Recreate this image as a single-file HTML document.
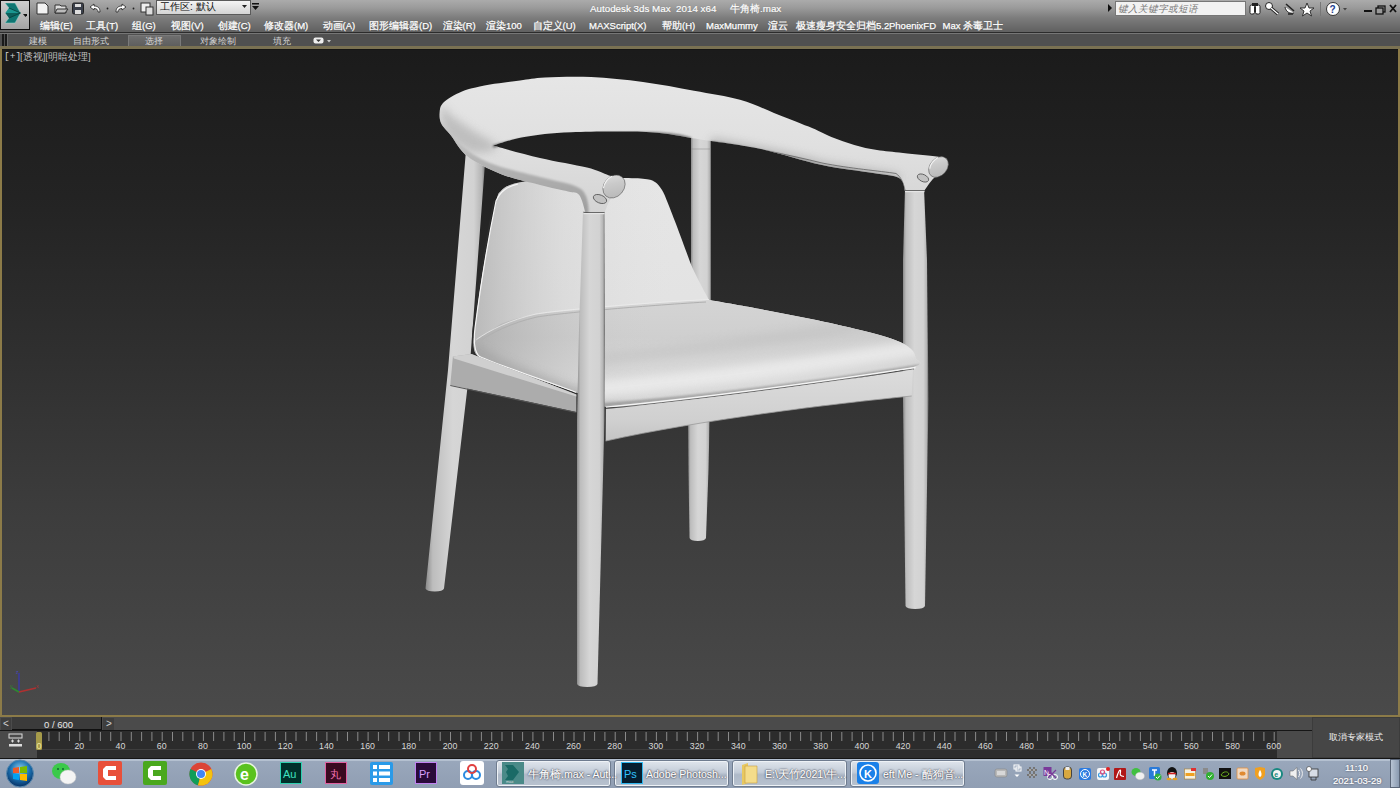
<!DOCTYPE html>
<html><head><meta charset="utf-8"><style>
*{margin:0;padding:0;box-sizing:border-box}
html,body{width:1400px;height:788px;overflow:hidden;background:#2a2a2a;font-family:"Liberation Sans",sans-serif}
.a{position:absolute}
.t{position:absolute;white-space:nowrap;line-height:1}
#top{left:0;top:0;width:1400px;height:32px;background:linear-gradient(#ababab 0px,#9a9a9a 8px,#7c7c7c 18px,#626262 31px)}
.mn{top:20.5px;font-size:9.5px;color:#fff;-webkit-text-stroke:.25px #fff;text-shadow:0 0 1px #555}
.rb{top:36.5px;font-size:9px;color:#d4d4d4}
#sep1{left:0;top:32px;width:1400px;height:1px;background:#2c2c2c}
#sep2{left:0;top:33px;width:1400px;height:1px;background:#767676}
#rib{left:0;top:34px;width:1400px;height:12px;background:#505050}
#gold{left:0;top:46px;width:1400px;height:3px;background:#7a7152}
#gold2{left:0;top:49px;width:1400px;height:1px;background:#141414}
#vp{left:0;top:50px;width:1400px;height:667px;background:linear-gradient(#1b1b1b 0%,#232323 22%,#2f2f2f 45%,#3d3d3d 70%,#4a4a4a 100%)}
#vpl{left:0;top:49px;width:2px;height:668px;background:#8c7b48}
#vpr{left:1398px;top:49px;width:2px;height:668px;background:#8c7b48}
#vpb{left:0;top:715px;width:1400px;height:2px;background:#8c7b48}
#slider{left:0;top:717px;width:1312px;height:14px;background:#4b4b4b}
#track{left:37px;top:731px;width:1240px;height:27px;background:#2c2c2c}
#trackl{left:0;top:731px;width:37px;height:27px;background:#4a4a4a}
#trackr{left:1277px;top:731px;width:35px;height:27px;background:#4a4a4a}
#xp{left:1312px;top:717px;width:88px;height:41px;background:#464646;border:1px solid #3c3c3c}
#task{left:0;top:758px;width:1400px;height:30px;background:linear-gradient(#9aa8bc 0px,#909eb3 100%)}
.tb{position:absolute;top:760px;height:27px;border:1px solid #6f7c8f;border-radius:3px;background:linear-gradient(#dfe5ec,#c3ccd8 45%,#aeb9c8 55%,#b8c2cf);box-shadow:inset 0 0 0 1px #eef2f6}
.tbt{position:absolute;top:768px;font-size:10.5px;color:#fff;-webkit-text-stroke:.2px #fff;text-shadow:0 0 2px #223,0 0 1px #223;white-space:nowrap}
.ic{position:absolute;top:761px;width:22px;height:24px}
.tr{position:absolute;top:766px;width:13px;height:13px}
</style></head><body>
<div id="top" class="a"></div>
<div class="a" style="left:0;top:0;width:30px;height:30px;background:#101010"></div>
<div class="a" style="left:1px;top:1px;width:28px;height:28px;background:linear-gradient(#cfcfcf,#a4a4a4)"></div>
<svg class="a" style="left:3px;top:3px" width="24" height="22"><path d="M2,0 L12,0 L17.5,10 L12,20 L2,20 L6,15 L2.5,10 L6,5Z" fill="#0f7672" stroke="#9ad8d0" stroke-width=".5"/><path d="M6,5 L17.5,10 L2.5,10Z" fill="#1a9690"/><path d="M2.5,10 L17.5,10 L6,15Z" fill="#0c5e5a"/><path d="M6,5 L17.5,10 M6,15 L17.5,10" stroke="#083c3a" stroke-width=".8"/><path d="M20,11 L25,11 L22.5,14Z" fill="#111"/></svg>
<svg class="a" style="left:34px;top:1px" width="122" height="15"><path d="M3,2 L11,2 L14,5 L14,13 L3,13Z" fill="#f2f2f2" stroke="#333" stroke-width="1"/><path d="M21,4 L26,4 L27,5 L32,5 L32,12 L21,12Z" fill="#ddd" stroke="#333"/><path d="M23,8 L34,8 L31,12 L21,12Z" fill="#bbb" stroke="#333"/><rect x="38.5" y="2" width="11" height="11" rx="1.5" fill="#3a3f4a" stroke="#222"/><rect x="41" y="3" width="6" height="3" fill="#ddd"/><rect x="41" y="9" width="6" height="4" fill="#ddd"/><path d="M56,6 L60,3 L60,5 C64,5 66,7 66,11 L64,11 C64,8.5 62.5,7.5 60,7.5 L60,9Z" fill="#fff" stroke="#222" stroke-width=".8"/><circle cx="73.5" cy="7.5" r=".9" fill="#222"/><path d="M92,6 L88,3 L88,5 C84,5 82,7 82,11 L84,11 C84,8.5 85.5,7.5 88,7.5 L88,9Z" fill="#fff" stroke="#222" stroke-width=".8"/><circle cx="99.5" cy="7.5" r=".9" fill="#222"/><rect x="107" y="2" width="9" height="9" fill="#eee" stroke="#333"/><rect x="112" y="6" width="7" height="8" fill="#ddd" stroke="#333"/></svg>
<div class="a" style="left:156px;top:0;width:95px;height:15px;border:1px solid #5a5a5a;background:linear-gradient(#f4f4f4,#d4d4d4)"></div>
<div class="t" style="left:160px;top:2px;font-size:10px;color:#111">工作区: 默认</div>
<svg class="a" style="left:242px;top:5px" width="6" height="4"><path d="M0,0 L5,0 L2.5,3Z" fill="#222"/></svg>
<svg class="a" style="left:252px;top:3px" width="8" height="8"><rect x="0" y="0" width="7" height="1.5" fill="#111"/><path d="M0,3 L7,3 L3.5,7Z" fill="#111"/></svg>
<div class="t" style="left:590px;top:3.5px;font-size:9.8px;color:#fff;-webkit-text-stroke:.2px #fff;text-shadow:0 0 1px #666">Autodesk 3ds Max&nbsp; 2014 x64</div>
<div class="t" style="left:730px;top:3.5px;font-size:9.8px;color:#fff;-webkit-text-stroke:.2px #fff;text-shadow:0 0 1px #666">牛角椅.max</div>
<svg class="a" style="left:1107px;top:4px" width="6" height="8"><path d="M1,0 L5,4 L1,8Z" fill="#111"/></svg>
<div class="a" style="left:1115px;top:1px;width:131px;height:15px;background:#f2f2f2;border:1px solid #777"></div>
<div class="t" style="left:1118px;top:3.5px;font-size:9.5px;color:#777;font-style:italic">键入关键字或短语</div>
<svg class="a" style="left:1248px;top:1px" width="152" height="16"><rect x="2" y="4" width="4.5" height="9" rx="1.5" fill="#fff" stroke="#222"/><rect x="7.5" y="4" width="4.5" height="9" rx="1.5" fill="#fff" stroke="#222"/><rect x="4" y="2" width="6" height="3" fill="#222"/><circle cx="21" cy="5" r="3.5" fill="#fff" stroke="#222"/><path d="M23,7 L30,13" stroke="#222" stroke-width="3"/><path d="M23,7 L30,13" stroke="#fff" stroke-width="1.2"/><path d="M38,3 L46,10" stroke="#222" stroke-width="1.5"/><path d="M37,6 C38,11 42,13 46,12" fill="#fff" stroke="#222"/><path d="M40,13 L45,13" stroke="#222" stroke-width="1.5"/><path d="M59,2 L61,7 L66,7 L62,10 L63.5,15 L59,12 L54.5,15 L56,10 L52,7 L57,7Z" fill="#fff" stroke="#222" stroke-width=".9"/><rect x="72" y="1" width="1" height="14" fill="#777"/><circle cx="85" cy="8" r="6.5" fill="#fff" stroke="#333"/><text x="81.5" y="12" font-size="10" font-weight="bold" fill="#1b3d8f" font-family="Liberation Sans">?</text><path d="M95,7 L99,7 L97,9.5Z" fill="#444"/><rect x="116" y="9" width="8" height="2" fill="#111"/><rect x="130" y="5" width="7" height="6" fill="none" stroke="#111" stroke-width="1.3"/><rect x="128" y="7" width="7" height="6" fill="#999" stroke="#111" stroke-width="1.3"/><path d="M142,4 L148,11 M148,4 L142,11" stroke="#111" stroke-width="1.8"/></svg>
<div class="t mn" style="left:40.0px">编辑(E)</div>
<div class="t mn" style="left:86.0px">工具(T)</div>
<div class="t mn" style="left:132.0px">组(G)</div>
<div class="t mn" style="left:171.0px">视图(V)</div>
<div class="t mn" style="left:217.5px">创建(C)</div>
<div class="t mn" style="left:264.0px">修改器(M)</div>
<div class="t mn" style="left:322.5px">动画(A)</div>
<div class="t mn" style="left:369.0px">图形编辑器(D)</div>
<div class="t mn" style="left:442.5px">渲染(R)</div>
<div class="t mn" style="left:486.0px">渲染100</div>
<div class="t mn" style="left:532.5px">自定义(U)</div>
<div class="t mn" style="left:589.0px">MAXScript(X)</div>
<div class="t mn" style="left:662.0px">帮助(H)</div>
<div class="t mn" style="left:706.0px">MaxMummy</div>
<div class="t mn" style="left:768.0px">渲云</div>
<div class="t mn" style="left:796.0px">极速瘦身安全归档5.2</div>
<div class="t mn" style="left:889.0px">PhoenixFD</div>
<div class="t mn" style="left:942.5px">Max 杀毒卫士</div>
<div id="sep1" class="a"></div><div id="sep2" class="a"></div><div id="rib" class="a"></div>
<div class="a" style="left:2px;top:34px;width:1.5px;height:12px;background:#1a1a1a"></div><div class="a" style="left:5px;top:34px;width:1.5px;height:12px;background:#1a1a1a"></div>
<div class="a" style="left:7px;top:34px;width:1px;height:12px;background:#6a6a6a"></div>
<div class="a" style="left:127.5px;top:35px;width:53px;height:12px;background:linear-gradient(#6e6e6e,#5c5c5c);border:1px solid #7a7a7a;border-bottom:none"></div>
<div class="t rb" style="left:28.5px">建模</div>
<div class="t rb" style="left:72.5px">自由形式</div>
<div class="t rb" style="left:145.0px">选择</div>
<div class="t rb" style="left:200.0px">对象绘制</div>
<div class="t rb" style="left:272.5px">填充</div>
<svg class="a" style="left:313px;top:37px" width="20" height="8"><rect x="0.5" y="0.5" width="10" height="6" rx="2" fill="#eee"/><path d="M3,2.5 L8,2.5 L5.5,5Z" fill="#333"/><path d="M14,3 L18,3 L16,5.5Z" fill="#ccc"/></svg>
<div id="gold" class="a"></div><div id="gold2" class="a"></div>
<div id="vp" class="a"></div>
<div class="t" style="left:4px;top:52px;font-size:9.5px;color:#d0d0d0;font-family:'Liberation Mono',monospace">[+]</div>
<div class="t" style="left:20px;top:52px;font-size:9.5px;color:#bdbdbd">[透视][明暗处理]</div>
<div id="vpl" class="a"></div><div id="vpr" class="a"></div><div id="vpb" class="a"></div>
<svg class="a" style="left:6px;top:668px" width="36" height="32"><path d="M13,5 L13,24" stroke="#3a3aa0" stroke-width="1.5"/><path d="M13,24 L30,20" stroke="#b03030" stroke-width="1.5"/><path d="M13,24 L6,20" stroke="#2e8a2e" stroke-width="1.5"/><text x="10" y="6" font-size="5" fill="#4848c0">z</text><text x="30" y="20" font-size="5" fill="#b03030">x</text><text x="4" y="20" font-size="5" fill="#2e8a2e">y</text></svg>
<svg class="a" style="left:0;top:0" width="1400" height="788"><defs>
<linearGradient id="lg" x1="0" x2="1" y1="0" y2="0"><stop offset="0" stop-color="#8a8a8a"/><stop offset=".12" stop-color="#bdbdbd"/><stop offset=".45" stop-color="#d6d6d6"/><stop offset=".8" stop-color="#d2d2d2"/><stop offset=".93" stop-color="#b4b4b4"/><stop offset="1" stop-color="#6a6a6a"/></linearGradient>
<linearGradient id="rail" x1="0" x2="0" y1="0" y2="1"><stop offset="0" stop-color="#e6e6e6"/><stop offset=".5" stop-color="#e0e0e0"/><stop offset="1" stop-color="#d4d4d4"/></linearGradient>
<linearGradient id="armband" x1="0" x2="0" y1="0" y2="1"><stop offset="0" stop-color="#c8c8c8" stop-opacity=".2"/><stop offset=".45" stop-color="#b4b4b4" stop-opacity=".95"/><stop offset="1" stop-color="#9c9c9c"/></linearGradient>
<linearGradient id="back" x1="0" x2="0" y1="0" y2="1"><stop offset="0" stop-color="#e6e6e6"/><stop offset=".7" stop-color="#e2e2e2"/><stop offset="1" stop-color="#d8d8d8"/></linearGradient>
<linearGradient id="backl" x1="0" x2="1" y1="0" y2="0"><stop offset="0" stop-color="#a8a8a8" stop-opacity=".7"/><stop offset=".2" stop-color="#c8c8c8" stop-opacity=".3"/><stop offset=".45" stop-color="#e0e0e0" stop-opacity="0"/></linearGradient>
<linearGradient id="seat" x1="0" x2="0" y1="0" y2="1"><stop offset="0" stop-color="#d4d4d4"/><stop offset=".35" stop-color="#cfcfcf"/><stop offset=".75" stop-color="#dadada"/><stop offset=".92" stop-color="#d6d6d6"/><stop offset="1" stop-color="#bcbcbc"/></linearGradient>
<linearGradient id="seatl" x1="0" x2="1" y1="0" y2="0"><stop offset="0" stop-color="#9a9a9a" stop-opacity=".6"/><stop offset=".25" stop-color="#bbbbbb" stop-opacity=".2"/><stop offset=".4" stop-color="#cccccc" stop-opacity="0"/></linearGradient>
<linearGradient id="frame" x1="0" x2="0" y1="0" y2="1"><stop offset="0" stop-color="#dcdcdc"/><stop offset=".7" stop-color="#d0d0d0"/><stop offset="1" stop-color="#c4c4c4"/></linearGradient>
<filter id="bl2" x="-20%" y="-20%" width="140%" height="140%"><feGaussianBlur stdDeviation="2"/></filter>
<filter id="bl1" x="-20%" y="-20%" width="140%" height="140%"><feGaussianBlur stdDeviation="1"/></filter>
<filter id="bl4" x="-20%" y="-50%" width="140%" height="200%"><feGaussianBlur stdDeviation="4"/></filter>
<clipPath id="seatclip"><path d="M476.7,340.0 C478.9,338.5 485.2,334.0 490.0,331.0 C494.8,328.0 497.9,324.7 505.6,322.0 C513.3,319.3 523.8,316.6 536.0,314.6 C548.2,312.6 559.7,311.9 578.7,310.0 C597.7,308.1 628.3,305.2 650.0,303.5 C671.7,301.8 699.2,300.6 709.0,300.0 C717.5,301.5 743.0,305.8 760.0,309.0 C777.0,312.2 794.3,315.5 811.0,319.0 C827.7,322.5 846.0,326.5 860.0,330.0 C874.0,333.5 886.5,336.8 895.0,340.0 C903.5,343.2 907.6,346.0 911.0,349.0 C914.4,352.0 915.1,355.1 915.6,358.0 C916.1,360.9 927.1,362.9 914.0,366.7 C900.9,370.5 867.0,376.1 837.0,381.0 C807.0,385.9 764.0,392.0 734.0,396.0 C704.0,400.0 678.5,403.2 657.0,405.0 C635.5,406.8 613.7,406.3 605.0,406.6 C600.2,404.2 580.8,394.4 576.0,392.0 C562.8,387.5 512.8,370.9 496.5,364.8 C480.2,358.7 481.8,358.7 478.0,355.6 C474.2,352.6 473.9,349.1 473.7,346.5 C473.5,343.9 476.2,341.1 476.7,340.0Z"/></clipPath>
<clipPath id="railclip"><path d="M439.8,110.5 C440.1,107.2 441.1,105.2 443.0,103.0 C444.9,100.8 447.8,98.9 451.0,97.0 C454.2,95.1 458.5,93.0 462.0,91.5 C465.5,90.0 467.3,89.5 472.0,88.3 C476.7,87.1 482.0,85.8 490.0,84.5 C498.0,83.2 510.8,81.7 520.0,80.5 C529.2,79.3 533.2,78.1 545.0,77.5 C556.8,76.9 574.7,76.2 591.0,77.0 C607.3,77.8 625.8,79.7 643.0,82.0 C660.2,84.3 677.8,87.8 694.0,90.7 C710.2,93.7 726.7,96.0 740.0,99.7 C753.3,103.4 762.6,108.4 774.0,112.9 C785.4,117.4 799.0,122.6 808.6,126.6 C818.2,130.6 823.8,133.8 831.4,136.9 C839.0,140.0 846.7,142.7 854.3,144.9 C861.9,147.1 868.9,148.7 877.0,150.0 C885.1,151.3 892.5,151.8 903.0,153.0 C913.5,154.2 932.7,155.5 940.0,157.0 C947.3,158.5 945.7,160.5 947.0,162.0 C948.3,163.5 948.5,164.2 948.0,166.0 C947.5,167.8 946.3,171.0 944.0,173.0 C941.7,175.0 937.3,175.0 934.0,178.0 C930.7,181.0 925.7,188.8 924.0,191.0 C920.8,191.0 908.2,191.0 905.0,191.0 C904.0,188.8 904.3,181.0 899.0,178.0 C893.7,175.0 885.8,175.2 873.0,173.0 C860.2,170.8 840.7,169.0 822.0,165.0 C803.3,161.0 779.5,153.0 761.0,149.0 C742.5,145.0 719.3,142.3 711.0,141.0 C707.7,140.5 694.3,138.5 691.0,138.0 C684.2,137.0 669.9,133.2 650.0,132.2 C630.1,131.2 592.4,131.4 571.4,132.2 C550.4,133.0 537.4,134.8 524.3,137.0 C511.2,139.2 498.1,144.2 492.9,145.6 C500.8,147.7 524.3,154.3 540.0,158.0 C555.7,161.7 575.5,164.7 587.0,167.6 C598.5,170.5 603.0,173.6 609.0,175.4 C615.0,177.2 620.5,177.0 623.3,178.6 C626.1,180.2 626.1,182.3 625.6,184.9 C625.1,187.5 622.5,191.7 620.0,194.0 C617.5,196.3 613.3,195.8 610.7,199.0 C608.1,202.2 605.5,210.7 604.4,213.0 C601.3,213.0 588.7,213.0 585.6,213.0 C584.5,210.0 582.2,198.6 579.3,195.0 C576.4,191.4 574.5,193.2 568.0,191.5 C561.5,189.8 551.2,187.9 540.0,185.0 C528.8,182.1 512.8,178.7 500.7,174.0 C488.6,169.3 476.0,163.0 467.7,156.6 C459.4,150.2 455.4,141.2 451.0,135.6 C446.6,130.0 442.9,127.2 441.0,123.0 C439.1,118.8 439.5,113.8 439.8,110.5Z"/></clipPath>
<linearGradient id="knob" x1="0" x2="1" y1="0" y2="1"><stop offset="0" stop-color="#e0e0e0"/><stop offset=".4" stop-color="#cacaca"/><stop offset="1" stop-color="#b4b4b4"/></linearGradient>
</defs>
<path fill="url(#lg)" d="M688.0,400.0 L710.0,400.0 L708.5,470.0 L706.0,538.0 Q705.0,541.0 697.8,541.0 Q690.5,541.0 689.5,538.0 L688.5,470.0 L688.0,400.0Z"/>
<path fill="url(#lg)" d="M691.0,136.0 L711.0,136.0 L711.0,310.0 L691.0,310.0Z"/>
<path fill="url(#lg)" d="M905.0,188.0 L924.0,188.0 L927.0,260.0 L928.5,400.0 L925.0,606.0 Q924.0,609.0 915.2,609.0 Q906.5,609.0 905.5,606.0 L903.0,400.0 L903.0,260.0 L905.0,188.0Z"/>
<path fill="url(#lg)" d="M466.0,150.0 L486.0,150.0 L469.5,370.0 L444.0,588.5 Q443.0,591.5 434.8,591.5 Q426.5,591.5 425.5,588.5 L448.0,370.0 L466.0,150.0Z"/>
<path fill="url(#back)" d="M501.0,191.0 C503.2,188.4 505.2,186.7 510.0,185.0 C514.8,183.3 520.0,182.0 530.0,181.0 C540.0,180.0 555.0,179.5 570.0,179.0 C585.0,178.5 607.5,178.0 620.0,178.0 C632.5,178.0 639.2,178.3 645.0,179.0 C650.8,179.7 652.2,180.2 655.0,182.0 C657.8,183.8 660.0,186.8 662.0,190.0 C664.0,193.2 664.7,195.3 667.0,201.0 C669.3,206.7 672.8,215.7 676.0,224.0 C679.2,232.3 683.2,243.5 686.0,251.0 C688.8,258.5 690.3,263.0 693.0,269.0 C695.7,275.0 699.3,281.8 702.0,287.0 C704.7,292.2 707.8,297.8 709.0,300.0 C717.5,301.5 743.0,305.8 760.0,309.0 C777.0,312.2 794.3,315.5 811.0,319.0 C827.7,322.5 846.0,326.5 860.0,330.0 C874.0,333.5 886.5,336.8 895.0,340.0 C903.5,343.2 907.6,346.0 911.0,349.0 C914.4,352.0 915.1,355.1 915.6,358.0 C916.1,360.9 927.1,362.9 914.0,366.7 C900.9,370.5 867.0,376.1 837.0,381.0 C807.0,385.9 764.0,392.0 734.0,396.0 C704.0,400.0 678.5,403.2 657.0,405.0 C635.5,406.8 613.7,406.3 605.0,406.6 C600.2,404.2 580.8,394.4 576.0,392.0 C566.2,388.6 530.2,375.9 517.0,371.4 C503.8,366.9 503.0,367.4 496.5,364.8 C490.0,362.2 481.8,358.7 478.0,355.6 C474.2,352.6 474.2,351.1 473.7,346.5 C473.2,341.9 474.2,337.1 475.2,328.0 C476.2,318.9 477.8,305.4 479.8,291.7 C481.8,278.0 484.6,261.2 487.4,246.0 C490.2,230.8 494.2,209.6 496.5,200.4 C498.8,191.2 498.8,193.6 501.0,191.0Z"/>
<path fill="url(#backl)" d="M501.0,191.0 C503.2,188.4 505.2,186.7 510.0,185.0 C514.8,183.3 520.0,182.0 530.0,181.0 C540.0,180.0 555.0,179.5 570.0,179.0 C585.0,178.5 607.5,178.0 620.0,178.0 C632.5,178.0 639.2,178.3 645.0,179.0 C650.8,179.7 652.2,180.2 655.0,182.0 C657.8,183.8 660.0,186.8 662.0,190.0 C664.0,193.2 664.7,195.3 667.0,201.0 C669.3,206.7 672.8,215.7 676.0,224.0 C679.2,232.3 683.2,243.5 686.0,251.0 C688.8,258.5 690.3,263.0 693.0,269.0 C695.7,275.0 699.3,281.8 702.0,287.0 C704.7,292.2 707.8,297.8 709.0,300.0 C717.5,301.5 743.0,305.8 760.0,309.0 C777.0,312.2 794.3,315.5 811.0,319.0 C827.7,322.5 846.0,326.5 860.0,330.0 C874.0,333.5 886.5,336.8 895.0,340.0 C903.5,343.2 907.6,346.0 911.0,349.0 C914.4,352.0 915.1,355.1 915.6,358.0 C916.1,360.9 927.1,362.9 914.0,366.7 C900.9,370.5 867.0,376.1 837.0,381.0 C807.0,385.9 764.0,392.0 734.0,396.0 C704.0,400.0 678.5,403.2 657.0,405.0 C635.5,406.8 613.7,406.3 605.0,406.6 C600.2,404.2 580.8,394.4 576.0,392.0 C566.2,388.6 530.2,375.9 517.0,371.4 C503.8,366.9 503.0,367.4 496.5,364.8 C490.0,362.2 481.8,358.7 478.0,355.6 C474.2,352.6 474.2,351.1 473.7,346.5 C473.2,341.9 474.2,337.1 475.2,328.0 C476.2,318.9 477.8,305.4 479.8,291.7 C481.8,278.0 484.6,261.2 487.4,246.0 C490.2,230.8 494.2,209.6 496.5,200.4 C498.8,191.2 498.8,193.6 501.0,191.0Z"/>
<path fill="url(#seat)" d="M476.7,340.0 C478.9,338.5 485.2,334.0 490.0,331.0 C494.8,328.0 497.9,324.7 505.6,322.0 C513.3,319.3 523.8,316.6 536.0,314.6 C548.2,312.6 559.7,311.9 578.7,310.0 C597.7,308.1 628.3,305.2 650.0,303.5 C671.7,301.8 699.2,300.6 709.0,300.0 C717.5,301.5 743.0,305.8 760.0,309.0 C777.0,312.2 794.3,315.5 811.0,319.0 C827.7,322.5 846.0,326.5 860.0,330.0 C874.0,333.5 886.5,336.8 895.0,340.0 C903.5,343.2 907.6,346.0 911.0,349.0 C914.4,352.0 915.1,355.1 915.6,358.0 C916.1,360.9 927.1,362.9 914.0,366.7 C900.9,370.5 867.0,376.1 837.0,381.0 C807.0,385.9 764.0,392.0 734.0,396.0 C704.0,400.0 678.5,403.2 657.0,405.0 C635.5,406.8 613.7,406.3 605.0,406.6 C600.2,404.2 580.8,394.4 576.0,392.0 C562.8,387.5 512.8,370.9 496.5,364.8 C480.2,358.7 481.8,358.7 478.0,355.6 C474.2,352.6 473.9,349.1 473.7,346.5 C473.5,343.9 476.2,341.1 476.7,340.0Z"/>
<path fill="url(#seatl)" d="M476.7,340.0 C478.9,338.5 485.2,334.0 490.0,331.0 C494.8,328.0 497.9,324.7 505.6,322.0 C513.3,319.3 523.8,316.6 536.0,314.6 C548.2,312.6 559.7,311.9 578.7,310.0 C597.7,308.1 628.3,305.2 650.0,303.5 C671.7,301.8 699.2,300.6 709.0,300.0 C717.5,301.5 743.0,305.8 760.0,309.0 C777.0,312.2 794.3,315.5 811.0,319.0 C827.7,322.5 846.0,326.5 860.0,330.0 C874.0,333.5 886.5,336.8 895.0,340.0 C903.5,343.2 907.6,346.0 911.0,349.0 C914.4,352.0 915.1,355.1 915.6,358.0 C916.1,360.9 927.1,362.9 914.0,366.7 C900.9,370.5 867.0,376.1 837.0,381.0 C807.0,385.9 764.0,392.0 734.0,396.0 C704.0,400.0 678.5,403.2 657.0,405.0 C635.5,406.8 613.7,406.3 605.0,406.6 C600.2,404.2 580.8,394.4 576.0,392.0 C562.8,387.5 512.8,370.9 496.5,364.8 C480.2,358.7 481.8,358.7 478.0,355.6 C474.2,352.6 473.9,349.1 473.7,346.5 C473.5,343.9 476.2,341.1 476.7,340.0Z"/>
<g clip-path="url(#seatclip)">
<path fill="none" stroke="#b8b8b8" stroke-width="12" opacity=".35" filter="url(#bl4)" d="M590,360 C700,350 820,333 930,314"/>
<path fill="none" stroke="#ededed" stroke-width="16" opacity=".8" filter="url(#bl4)" d="M590,390 C700,380 820,364 930,346"/>
<path fill="none" stroke="#8a8a8a" stroke-width="3" opacity=".7" filter="url(#bl1)" d="M590,406 C700,397 820,382 920,366"/>
<path fill="none" stroke="#a0a0a0" stroke-width="16" opacity=".6" filter="url(#bl4)" d="M470,348 C490,366 530,380 590,400"/>
</g>
<path fill="none" stroke="#eeeeee" stroke-width="1" opacity=".7" d="M476.5,339.5 C490,330 510,320 536,314 C560,310 640,303 709,299.5"/>
<path fill="none" stroke="#b0b0b0" stroke-width="1" d="M477.5,342.5 C491,333 511,323 537,317 C561,313 640,306 706,302"/>
<path fill="none" stroke="#f6f6f6" stroke-width="1.2" d="M518,184 C506,187 500,192 496,201 C488,240 480,290 475,328 C473.5,340 474,350 478.5,355.8 C485,361 540,378 576.3,392.5"/>
<path fill="none" stroke="#2e2e2e" stroke-width="1" d="M494,201 C486,240 478,290 473.2,328 C471.7,340 472,352 477,357.5 C484,363 540,380 576.3,394.2"/>
<path fill="none" stroke="#f4f4f4" stroke-width="1.3" d="M605.9,407.2 C700,398 820,382 915.6,367.5"/>
<path fill="none" stroke="#555" stroke-width=".8" d="M605.9,408.6 C700,399.4 820,383.4 914,369"/>
<path fill="#acacac" d="M452.9,356.6 L471.5,354.0 L576.3,394.5 L576.3,412.0 L450.3,385.0Z"/>
<path fill="#cfcfcf" d="M452.9,356.6 L471.5,354.0 L576.3,394.5 L576.3,396.5 L454.0,358.5Z"/>
<path fill="none" stroke="#555" stroke-width="1" d="M450.3,385.5 L576.3,412.5"/>
<path fill="url(#frame)" d="M605.9,409 C700,400 820,384 913,369.5 L911.7,396 C830,404 700,420 605.7,441 Z"/>
<path fill="none" stroke="#9a9a9a" stroke-width=".8" d="M911.7,396 C830,404 700,420 605.7,441"/>
<path fill="url(#lg)" d="M583.0,211.0 L604.5,211.0 L605.0,330.0 L604.5,420.0 L597.5,684.0 Q596.5,687.0 587.2,687.0 Q578.0,687.0 577.0,684.0 L577.0,420.0 L579.0,330.0 L583.0,211.0Z"/>
<path fill="url(#rail)" d="M439.8,110.5 C440.1,107.2 441.1,105.2 443.0,103.0 C444.9,100.8 447.8,98.9 451.0,97.0 C454.2,95.1 458.5,93.0 462.0,91.5 C465.5,90.0 467.3,89.5 472.0,88.3 C476.7,87.1 482.0,85.8 490.0,84.5 C498.0,83.2 510.8,81.7 520.0,80.5 C529.2,79.3 533.2,78.1 545.0,77.5 C556.8,76.9 574.7,76.2 591.0,77.0 C607.3,77.8 625.8,79.7 643.0,82.0 C660.2,84.3 677.8,87.8 694.0,90.7 C710.2,93.7 726.7,96.0 740.0,99.7 C753.3,103.4 762.6,108.4 774.0,112.9 C785.4,117.4 799.0,122.6 808.6,126.6 C818.2,130.6 823.8,133.8 831.4,136.9 C839.0,140.0 846.7,142.7 854.3,144.9 C861.9,147.1 868.9,148.7 877.0,150.0 C885.1,151.3 892.5,151.8 903.0,153.0 C913.5,154.2 932.7,155.5 940.0,157.0 C947.3,158.5 945.7,160.5 947.0,162.0 C948.3,163.5 948.5,164.2 948.0,166.0 C947.5,167.8 946.3,171.0 944.0,173.0 C941.7,175.0 937.3,175.0 934.0,178.0 C930.7,181.0 925.7,188.8 924.0,191.0 C920.8,191.0 908.2,191.0 905.0,191.0 C904.0,188.8 904.3,181.0 899.0,178.0 C893.7,175.0 885.8,175.2 873.0,173.0 C860.2,170.8 840.7,169.0 822.0,165.0 C803.3,161.0 779.5,153.0 761.0,149.0 C742.5,145.0 719.3,142.3 711.0,141.0 C707.7,140.5 694.3,138.5 691.0,138.0 C684.2,137.0 669.9,133.2 650.0,132.2 C630.1,131.2 592.4,131.4 571.4,132.2 C550.4,133.0 537.4,134.8 524.3,137.0 C511.2,139.2 498.1,144.2 492.9,145.6 C500.8,147.7 524.3,154.3 540.0,158.0 C555.7,161.7 575.5,164.7 587.0,167.6 C598.5,170.5 603.0,173.6 609.0,175.4 C615.0,177.2 620.5,177.0 623.3,178.6 C626.1,180.2 626.1,182.3 625.6,184.9 C625.1,187.5 622.5,191.7 620.0,194.0 C617.5,196.3 613.3,195.8 610.7,199.0 C608.1,202.2 605.5,210.7 604.4,213.0 C601.3,213.0 588.7,213.0 585.6,213.0 C584.5,210.0 582.2,198.6 579.3,195.0 C576.4,191.4 574.5,193.2 568.0,191.5 C561.5,189.8 551.2,187.9 540.0,185.0 C528.8,182.1 512.8,178.7 500.7,174.0 C488.6,169.3 476.0,163.0 467.7,156.6 C459.4,150.2 455.4,141.2 451.0,135.6 C446.6,130.0 442.9,127.2 441.0,123.0 C439.1,118.8 439.5,113.8 439.8,110.5Z"/>
<g clip-path="url(#railclip)"><path fill="url(#armband)" filter="url(#bl1)" d="M436.0,112.0 C436.0,110.7 441.7,122.3 446.0,128.0 C450.3,133.7 454.7,140.2 462.0,146.0 C469.3,151.8 477.0,157.8 490.0,163.0 C503.0,168.2 525.8,173.2 540.0,177.0 C554.2,180.8 567.3,182.8 575.0,186.0 C582.7,189.2 583.8,191.3 586.0,196.0 C588.2,200.7 589.3,211.0 588.0,214.0 C586.7,217.0 580.2,216.8 578.0,214.0 C575.8,211.2 577.0,200.5 575.0,197.0 C573.0,193.5 571.8,194.5 566.0,193.0 C560.2,191.5 550.9,190.7 540.0,188.0 C529.1,185.3 513.2,181.7 500.7,177.0 C488.2,172.3 474.1,166.8 465.0,160.0 C455.9,153.2 450.8,144.0 446.0,136.0 C441.2,128.0 436.0,113.3 436.0,112.0Z"/></g>
<g clip-path="url(#railclip)"><path fill="#b0b0b0" opacity=".7" filter="url(#bl4)" d="M441.0,106.0 C442.0,103.0 446.8,112.0 452.0,116.0 C457.2,120.0 464.5,124.8 472.0,130.0 C479.5,135.2 497.0,143.3 497.0,147.0 C497.0,150.7 480.5,154.2 472.0,152.0 C463.5,149.8 451.2,141.7 446.0,134.0 C440.8,126.3 440.0,109.0 441.0,106.0Z"/>
<path fill="none" stroke="#3c3c3c" stroke-width="2.5" opacity=".7" filter="url(#bl1)" d="M493,146.5 C520,138 560,133.5 650,133.3 C670,134 685,136.5 691,139"/>
<path fill="none" stroke="#3c3c3c" stroke-width="2" opacity=".6" filter="url(#bl1)" d="M711,142 C740,146 790,156 822,166 C850,171 880,174 899,179"/></g>
<g clip-path="url(#railclip)">
<path fill="none" stroke="#9a9a9a" stroke-width="9" opacity=".55" filter="url(#bl4)" d="M711,142 C740,147 790,156 822,166 C850,171 880,174 899,179"/>
<path fill="none" stroke="#555" stroke-width=".9" opacity=".8" d="M712,141.5 C745,146 790,155 822,163 C850,168.5 880,171 896,173.5 C901,177 903,182 905,190"/>
</g>
<rect x="583.5" y="212" width="21" height="1" fill="#3a3a3a" opacity=".7"/><rect x="583.5" y="213" width="21" height="1.2" fill="#e6e6e6"/>
<rect x="905" y="190" width="19.5" height="1" fill="#3a3a3a" opacity=".7"/><rect x="905" y="191" width="19.5" height="1.2" fill="#e6e6e6"/>
<rect x="691" y="148.5" width="20" height="1" fill="#8a8a8a" opacity=".5"/>
<g transform="translate(614,186.5) rotate(40)"><ellipse cx="0" cy="0" rx="10" ry="12.5" fill="url(#knob)" stroke="#4a4a4a" stroke-width=".5"/><path d="M-8,-7 C-10,-2 -9.5,4 -7,8" stroke="#f4f4f4" stroke-width="1.1" fill="none"/></g>
<g transform="translate(600,199) rotate(22)"><ellipse cx="0" cy="0" rx="7" ry="4" fill="#bdbdbd" stroke="#333" stroke-width=".8" opacity=".8"/></g>
<g transform="translate(938.5,167) rotate(40)"><ellipse cx="0" cy="0" rx="8.5" ry="11.5" fill="url(#knob)" stroke="#4a4a4a" stroke-width=".5"/><path d="M-6.5,-7 C-8.5,-2 -8,4 -5.5,7" stroke="#f4f4f4" stroke-width="1.1" fill="none"/></g>
<g transform="translate(923,178) rotate(25)"><ellipse cx="0" cy="0" rx="6" ry="3.5" fill="#bdbdbd" stroke="#333" stroke-width=".8" opacity=".8"/></g></svg>
<div id="slider" class="a"></div>
<div class="a" style="left:1px;top:718px;width:10px;height:12px;background:#3e3e3e"></div>
<div class="t" style="left:3px;top:719px;font-size:10px;color:#cfcfcf">&lt;</div>
<div class="a" style="left:12px;top:717px;width:90px;height:13px;background:#3b3b3b;border-bottom:1px solid #111;border-right:1px solid #111"></div>
<div class="t" style="left:44px;top:719.5px;font-size:9.5px;color:#e8e8e8">0 / 600</div>
<div class="a" style="left:103px;top:718px;width:11px;height:12px;background:#3e3e3e"></div>
<div class="t" style="left:106px;top:719px;font-size:10px;color:#cfcfcf">&gt;</div>
<div class="a" style="left:0;top:730px;width:1312px;height:1px;background:#161616"></div>
<div id="trackl" class="a"></div><div id="track" class="a"></div><div id="trackr" class="a"></div>
<div class="a" style="left:37px;top:749px;width:1240px;height:1px;background:#3e3e3e"></div>
<svg class="a" style="left:8px;top:733px" width="16" height="15"><rect x="1" y="1" width="13" height="4" fill="none" stroke="#ddd" stroke-width="1"/><path d="M3,8 L6,8 M4.5,6.5 L4.5,9.5 M9,8 L12,8 M10.5,6.5 L10.5,9.5" stroke="#ddd"/><rect x="1" y="11" width="13" height="2.5" fill="#ddd"/></svg>
<svg class="a" style="left:0;top:732px" width="1312" height="24"><rect x="48.4" y="0" width="1" height="9" fill="#8a8a8a"/><rect x="58.7" y="0" width="1" height="9" fill="#8a8a8a"/><rect x="69.0" y="0" width="1" height="9" fill="#8a8a8a"/><rect x="79.3" y="0" width="1" height="9" fill="#8a8a8a"/><rect x="89.6" y="0" width="1" height="9" fill="#8a8a8a"/><rect x="99.9" y="0" width="1" height="9" fill="#8a8a8a"/><rect x="110.2" y="0" width="1" height="9" fill="#8a8a8a"/><rect x="120.5" y="0" width="1" height="9" fill="#8a8a8a"/><rect x="130.8" y="0" width="1" height="9" fill="#8a8a8a"/><rect x="141.1" y="0" width="1" height="9" fill="#8a8a8a"/><rect x="151.4" y="0" width="1" height="9" fill="#8a8a8a"/><rect x="161.7" y="0" width="1" height="9" fill="#8a8a8a"/><rect x="172.0" y="0" width="1" height="9" fill="#8a8a8a"/><rect x="182.3" y="0" width="1" height="9" fill="#8a8a8a"/><rect x="192.6" y="0" width="1" height="9" fill="#8a8a8a"/><rect x="202.9" y="0" width="1" height="9" fill="#8a8a8a"/><rect x="213.1" y="0" width="1" height="9" fill="#8a8a8a"/><rect x="223.4" y="0" width="1" height="9" fill="#8a8a8a"/><rect x="233.7" y="0" width="1" height="9" fill="#8a8a8a"/><rect x="244.0" y="0" width="1" height="9" fill="#8a8a8a"/><rect x="254.3" y="0" width="1" height="9" fill="#8a8a8a"/><rect x="264.6" y="0" width="1" height="9" fill="#8a8a8a"/><rect x="274.9" y="0" width="1" height="9" fill="#8a8a8a"/><rect x="285.2" y="0" width="1" height="9" fill="#8a8a8a"/><rect x="295.5" y="0" width="1" height="9" fill="#8a8a8a"/><rect x="305.8" y="0" width="1" height="9" fill="#8a8a8a"/><rect x="316.1" y="0" width="1" height="9" fill="#8a8a8a"/><rect x="326.4" y="0" width="1" height="9" fill="#8a8a8a"/><rect x="336.7" y="0" width="1" height="9" fill="#8a8a8a"/><rect x="347.0" y="0" width="1" height="9" fill="#8a8a8a"/><rect x="357.3" y="0" width="1" height="9" fill="#8a8a8a"/><rect x="367.6" y="0" width="1" height="9" fill="#8a8a8a"/><rect x="377.9" y="0" width="1" height="9" fill="#8a8a8a"/><rect x="388.2" y="0" width="1" height="9" fill="#8a8a8a"/><rect x="398.5" y="0" width="1" height="9" fill="#8a8a8a"/><rect x="408.8" y="0" width="1" height="9" fill="#8a8a8a"/><rect x="419.1" y="0" width="1" height="9" fill="#8a8a8a"/><rect x="429.4" y="0" width="1" height="9" fill="#8a8a8a"/><rect x="439.7" y="0" width="1" height="9" fill="#8a8a8a"/><rect x="450.0" y="0" width="1" height="9" fill="#8a8a8a"/><rect x="460.3" y="0" width="1" height="9" fill="#8a8a8a"/><rect x="470.6" y="0" width="1" height="9" fill="#8a8a8a"/><rect x="480.9" y="0" width="1" height="9" fill="#8a8a8a"/><rect x="491.2" y="0" width="1" height="9" fill="#8a8a8a"/><rect x="501.5" y="0" width="1" height="9" fill="#8a8a8a"/><rect x="511.8" y="0" width="1" height="9" fill="#8a8a8a"/><rect x="522.1" y="0" width="1" height="9" fill="#8a8a8a"/><rect x="532.4" y="0" width="1" height="9" fill="#8a8a8a"/><rect x="542.7" y="0" width="1" height="9" fill="#8a8a8a"/><rect x="553.0" y="0" width="1" height="9" fill="#8a8a8a"/><rect x="563.2" y="0" width="1" height="9" fill="#8a8a8a"/><rect x="573.5" y="0" width="1" height="9" fill="#8a8a8a"/><rect x="583.8" y="0" width="1" height="9" fill="#8a8a8a"/><rect x="594.1" y="0" width="1" height="9" fill="#8a8a8a"/><rect x="604.4" y="0" width="1" height="9" fill="#8a8a8a"/><rect x="614.7" y="0" width="1" height="9" fill="#8a8a8a"/><rect x="625.0" y="0" width="1" height="9" fill="#8a8a8a"/><rect x="635.3" y="0" width="1" height="9" fill="#8a8a8a"/><rect x="645.6" y="0" width="1" height="9" fill="#8a8a8a"/><rect x="655.9" y="0" width="1" height="9" fill="#8a8a8a"/><rect x="666.2" y="0" width="1" height="9" fill="#8a8a8a"/><rect x="676.5" y="0" width="1" height="9" fill="#8a8a8a"/><rect x="686.8" y="0" width="1" height="9" fill="#8a8a8a"/><rect x="697.1" y="0" width="1" height="9" fill="#8a8a8a"/><rect x="707.4" y="0" width="1" height="9" fill="#8a8a8a"/><rect x="717.7" y="0" width="1" height="9" fill="#8a8a8a"/><rect x="728.0" y="0" width="1" height="9" fill="#8a8a8a"/><rect x="738.3" y="0" width="1" height="9" fill="#8a8a8a"/><rect x="748.6" y="0" width="1" height="9" fill="#8a8a8a"/><rect x="758.9" y="0" width="1" height="9" fill="#8a8a8a"/><rect x="769.2" y="0" width="1" height="9" fill="#8a8a8a"/><rect x="779.5" y="0" width="1" height="9" fill="#8a8a8a"/><rect x="789.8" y="0" width="1" height="9" fill="#8a8a8a"/><rect x="800.1" y="0" width="1" height="9" fill="#8a8a8a"/><rect x="810.4" y="0" width="1" height="9" fill="#8a8a8a"/><rect x="820.7" y="0" width="1" height="9" fill="#8a8a8a"/><rect x="831.0" y="0" width="1" height="9" fill="#8a8a8a"/><rect x="841.3" y="0" width="1" height="9" fill="#8a8a8a"/><rect x="851.6" y="0" width="1" height="9" fill="#8a8a8a"/><rect x="861.9" y="0" width="1" height="9" fill="#8a8a8a"/><rect x="872.2" y="0" width="1" height="9" fill="#8a8a8a"/><rect x="882.5" y="0" width="1" height="9" fill="#8a8a8a"/><rect x="892.8" y="0" width="1" height="9" fill="#8a8a8a"/><rect x="903.0" y="0" width="1" height="9" fill="#8a8a8a"/><rect x="913.3" y="0" width="1" height="9" fill="#8a8a8a"/><rect x="923.6" y="0" width="1" height="9" fill="#8a8a8a"/><rect x="933.9" y="0" width="1" height="9" fill="#8a8a8a"/><rect x="944.2" y="0" width="1" height="9" fill="#8a8a8a"/><rect x="954.5" y="0" width="1" height="9" fill="#8a8a8a"/><rect x="964.8" y="0" width="1" height="9" fill="#8a8a8a"/><rect x="975.1" y="0" width="1" height="9" fill="#8a8a8a"/><rect x="985.4" y="0" width="1" height="9" fill="#8a8a8a"/><rect x="995.7" y="0" width="1" height="9" fill="#8a8a8a"/><rect x="1006.0" y="0" width="1" height="9" fill="#8a8a8a"/><rect x="1016.3" y="0" width="1" height="9" fill="#8a8a8a"/><rect x="1026.6" y="0" width="1" height="9" fill="#8a8a8a"/><rect x="1036.9" y="0" width="1" height="9" fill="#8a8a8a"/><rect x="1047.2" y="0" width="1" height="9" fill="#8a8a8a"/><rect x="1057.5" y="0" width="1" height="9" fill="#8a8a8a"/><rect x="1067.8" y="0" width="1" height="9" fill="#8a8a8a"/><rect x="1078.1" y="0" width="1" height="9" fill="#8a8a8a"/><rect x="1088.4" y="0" width="1" height="9" fill="#8a8a8a"/><rect x="1098.7" y="0" width="1" height="9" fill="#8a8a8a"/><rect x="1109.0" y="0" width="1" height="9" fill="#8a8a8a"/><rect x="1119.3" y="0" width="1" height="9" fill="#8a8a8a"/><rect x="1129.6" y="0" width="1" height="9" fill="#8a8a8a"/><rect x="1139.9" y="0" width="1" height="9" fill="#8a8a8a"/><rect x="1150.2" y="0" width="1" height="9" fill="#8a8a8a"/><rect x="1160.5" y="0" width="1" height="9" fill="#8a8a8a"/><rect x="1170.8" y="0" width="1" height="9" fill="#8a8a8a"/><rect x="1181.1" y="0" width="1" height="9" fill="#8a8a8a"/><rect x="1191.4" y="0" width="1" height="9" fill="#8a8a8a"/><rect x="1201.7" y="0" width="1" height="9" fill="#8a8a8a"/><rect x="1212.0" y="0" width="1" height="9" fill="#8a8a8a"/><rect x="1222.3" y="0" width="1" height="9" fill="#8a8a8a"/><rect x="1232.6" y="0" width="1" height="9" fill="#8a8a8a"/><rect x="1242.8" y="0" width="1" height="9" fill="#8a8a8a"/><rect x="1253.1" y="0" width="1" height="9" fill="#8a8a8a"/><rect x="1263.4" y="0" width="1" height="9" fill="#8a8a8a"/><rect x="1273.7" y="0" width="1" height="9" fill="#8a8a8a"/><text x="79.3" y="16.5" font-size="8.8" fill="#d8d8d8" text-anchor="middle" font-family="Liberation Sans">20</text><text x="120.5" y="16.5" font-size="8.8" fill="#d8d8d8" text-anchor="middle" font-family="Liberation Sans">40</text><text x="161.7" y="16.5" font-size="8.8" fill="#d8d8d8" text-anchor="middle" font-family="Liberation Sans">60</text><text x="202.9" y="16.5" font-size="8.8" fill="#d8d8d8" text-anchor="middle" font-family="Liberation Sans">80</text><text x="244.0" y="16.5" font-size="8.8" fill="#d8d8d8" text-anchor="middle" font-family="Liberation Sans">100</text><text x="285.2" y="16.5" font-size="8.8" fill="#d8d8d8" text-anchor="middle" font-family="Liberation Sans">120</text><text x="326.4" y="16.5" font-size="8.8" fill="#d8d8d8" text-anchor="middle" font-family="Liberation Sans">140</text><text x="367.6" y="16.5" font-size="8.8" fill="#d8d8d8" text-anchor="middle" font-family="Liberation Sans">160</text><text x="408.8" y="16.5" font-size="8.8" fill="#d8d8d8" text-anchor="middle" font-family="Liberation Sans">180</text><text x="450.0" y="16.5" font-size="8.8" fill="#d8d8d8" text-anchor="middle" font-family="Liberation Sans">200</text><text x="491.2" y="16.5" font-size="8.8" fill="#d8d8d8" text-anchor="middle" font-family="Liberation Sans">220</text><text x="532.4" y="16.5" font-size="8.8" fill="#d8d8d8" text-anchor="middle" font-family="Liberation Sans">240</text><text x="573.5" y="16.5" font-size="8.8" fill="#d8d8d8" text-anchor="middle" font-family="Liberation Sans">260</text><text x="614.7" y="16.5" font-size="8.8" fill="#d8d8d8" text-anchor="middle" font-family="Liberation Sans">280</text><text x="655.9" y="16.5" font-size="8.8" fill="#d8d8d8" text-anchor="middle" font-family="Liberation Sans">300</text><text x="697.1" y="16.5" font-size="8.8" fill="#d8d8d8" text-anchor="middle" font-family="Liberation Sans">320</text><text x="738.3" y="16.5" font-size="8.8" fill="#d8d8d8" text-anchor="middle" font-family="Liberation Sans">340</text><text x="779.5" y="16.5" font-size="8.8" fill="#d8d8d8" text-anchor="middle" font-family="Liberation Sans">360</text><text x="820.7" y="16.5" font-size="8.8" fill="#d8d8d8" text-anchor="middle" font-family="Liberation Sans">380</text><text x="861.9" y="16.5" font-size="8.8" fill="#d8d8d8" text-anchor="middle" font-family="Liberation Sans">400</text><text x="903.0" y="16.5" font-size="8.8" fill="#d8d8d8" text-anchor="middle" font-family="Liberation Sans">420</text><text x="944.2" y="16.5" font-size="8.8" fill="#d8d8d8" text-anchor="middle" font-family="Liberation Sans">440</text><text x="985.4" y="16.5" font-size="8.8" fill="#d8d8d8" text-anchor="middle" font-family="Liberation Sans">460</text><text x="1026.6" y="16.5" font-size="8.8" fill="#d8d8d8" text-anchor="middle" font-family="Liberation Sans">480</text><text x="1067.8" y="16.5" font-size="8.8" fill="#d8d8d8" text-anchor="middle" font-family="Liberation Sans">500</text><text x="1109.0" y="16.5" font-size="8.8" fill="#d8d8d8" text-anchor="middle" font-family="Liberation Sans">520</text><text x="1150.2" y="16.5" font-size="8.8" fill="#d8d8d8" text-anchor="middle" font-family="Liberation Sans">540</text><text x="1191.4" y="16.5" font-size="8.8" fill="#d8d8d8" text-anchor="middle" font-family="Liberation Sans">560</text><text x="1232.6" y="16.5" font-size="8.8" fill="#d8d8d8" text-anchor="middle" font-family="Liberation Sans">580</text><text x="1273.7" y="16.5" font-size="8.8" fill="#d8d8d8" text-anchor="middle" font-family="Liberation Sans">600</text><rect x="36" y="0" width="6" height="18" rx="1.5" fill="#a69b4a"/><text x="39" y="17" font-size="9" fill="#f0e8a0" text-anchor="middle" font-family="Liberation Sans">0</text></svg>
<div id="xp" class="a"></div>
<div class="t" style="left:1329px;top:733px;font-size:9px;color:#eee">取消专家模式</div>
<div id="task" class="a"></div>
<div class="a" style="left:0;top:758px;width:1400px;height:1px;background:#151515"></div><div class="a" style="left:0;top:759px;width:1400px;height:1.5px;background:#b4c0d0"></div>
<svg class="a" style="left:5px;top:759px" width="30" height="29"><defs><radialGradient id="orb" cx=".5" cy=".35" r=".6"><stop offset="0" stop-color="#8fd0f0"/><stop offset=".6" stop-color="#1a70b0"/><stop offset="1" stop-color="#0a3a70"/></radialGradient></defs><circle cx="15" cy="14.5" r="13.5" fill="url(#orb)" stroke="#5a8ab0"/><path d="M8,9 L14,8 L14,14 L8,14Z" fill="#f05a28"/><path d="M15,8 L22,7 L22,14 L15,14Z" fill="#7cbb00"/><path d="M8,15 L14,15 L14,21 L8,20Z" fill="#00a1f1"/><path d="M15,15 L22,15 L22,22 L15,21Z" fill="#ffbb00"/></svg>
<svg class="a" style="left:51px;top:761px" width="28" height="26"><ellipse cx="10" cy="10" rx="9" ry="8" fill="#3bc94a"/><ellipse cx="17" cy="16" rx="8" ry="7" fill="#f4f4f4" stroke="#ccc" stroke-width=".5"/><circle cx="7" cy="8" r="1" fill="#163"/><circle cx="12" cy="8" r="1" fill="#163"/></svg>
<svg class="a" style="left:98px;top:761px" width="25" height="25"><rect x="0" y="0" width="24" height="24" rx="2" fill="#e8503a"/><path d="M18,5 L8,5 L5,8 L5,16 L8,19 L18,19 L18,15 L10,15 L10,9 L18,9Z" fill="#fff"/></svg>
<svg class="a" style="left:143px;top:761px" width="25" height="25"><rect x="0" y="0" width="24" height="24" rx="2" fill="#4aa81e"/><path d="M18,5 L8,5 L5,8 L5,16 L8,19 L18,19 L18,15 L10,15 L10,9 L18,9Z" fill="#fff"/></svg>
<svg class="a" style="left:189px;top:762px" width="24" height="24"><circle cx="12" cy="12" r="11.5" fill="#db4437"/><path d="M12,12 L1.5,7 A11.5,11.5 0 0 0 9,23.2Z" fill="#0f9d58"/><path d="M12,12 L9,23.2 A11.5,11.5 0 0 0 23.5,12 L22.5,7Z" fill="#f4c20d"/><circle cx="12" cy="12" r="5" fill="#fff"/><circle cx="12" cy="12" r="4" fill="#4285f4"/></svg>
<svg class="a" style="left:234px;top:762px" width="24" height="24"><circle cx="12" cy="12" r="11" fill="#5ac21e" stroke="#e8f4e0" stroke-width="1.5"/><text x="6" y="18" font-size="16" font-weight="bold" fill="#fff" font-family="Liberation Sans">e</text></svg>
<svg class="a" style="left:280px;top:762px" width="22" height="22"><rect x=".5" y=".5" width="21" height="21" fill="#00302a" stroke="#2fd0b0"/><text x="3" y="16" font-size="11" fill="#3fe0c0" font-family="Liberation Sans">Au</text></svg>
<svg class="a" style="left:325px;top:762px" width="22" height="22"><rect x=".5" y=".5" width="21" height="21" fill="#3a0a20" stroke="#e060a0"/><text x="5" y="16" font-size="11" fill="#f070b0">丸</text></svg>
<svg class="a" style="left:370px;top:762px" width="23" height="23"><rect x="0" y="0" width="23" height="23" rx="2" fill="#2a9ae8"/><rect x="3" y="3" width="4" height="4" fill="#fff"/><rect x="9" y="3" width="11" height="4" fill="#fff"/><rect x="3" y="9.5" width="4" height="4" fill="#fff"/><rect x="9" y="9.5" width="11" height="4" fill="#fff"/><rect x="3" y="16" width="4" height="4" fill="#fff"/><rect x="9" y="16" width="11" height="4" fill="#fff"/></svg>
<svg class="a" style="left:415px;top:762px" width="22" height="22"><rect x=".5" y=".5" width="21" height="21" fill="#2a0a3a" stroke="#c080f0"/><text x="4" y="16" font-size="11" fill="#d8a0ff" font-family="Liberation Sans">Pr</text></svg>
<svg class="a" style="left:460px;top:761px" width="24" height="25"><rect x="0" y="0" width="24" height="24" rx="3" fill="#fff"/><circle cx="8" cy="14" r="4" fill="none" stroke="#2a8ae0" stroke-width="2"/><circle cx="16" cy="14" r="4" fill="none" stroke="#2a8ae0" stroke-width="2"/><circle cx="12" cy="8" r="4" fill="none" stroke="#e04040" stroke-width="2"/></svg>
<div class="tb" style="left:496px;width:115px"></div>
<div class="tb" style="left:614px;width:115px"></div>
<div class="tb" style="left:732px;width:115px"></div>
<div class="tb" style="left:850px;width:115px"></div>
<svg class="a" style="left:502px;top:762px" width="24" height="22"><rect x="0" y="0" width="22" height="22" fill="#4a8a88"/><path d="M3,3 L11,3 L17,10 L11,18 L3,18 L6,14 L4,10 L6,7Z" fill="#1a6a66"/><text x="4" y="21" font-size="4" fill="#ddd">max</text></svg>
<div class="tbt" style="left:528px">牛角椅.max - Aut...</div>
<svg class="a" style="left:621px;top:762px" width="22" height="22"><rect x=".5" y=".5" width="21" height="21" fill="#061e30" stroke="#30b8f0"/><text x="3" y="16" font-size="11" fill="#30c0ff" font-family="Liberation Sans">Ps</text></svg>
<div class="tbt" style="left:646px">Adobe Photosh...</div>
<svg class="a" style="left:739px;top:761px" width="22" height="25"><path d="M3,4 L9,2 L9,22 L3,24Z" fill="#e8c860"/><path d="M6,5 L18,5 L18,22 L6,22Z" fill="#f4dc8a" stroke="#c8a040" stroke-width=".6"/></svg>
<div class="tbt" style="left:765px">E:\天竹2021\牛...</div>
<svg class="a" style="left:857px;top:762px" width="22" height="22"><rect x="0" y="0" width="22" height="22" rx="3" fill="#1a80e8"/><circle cx="11" cy="11" r="8" fill="none" stroke="#fff" stroke-width="1.6"/><text x="7" y="15.5" font-size="11" font-weight="bold" fill="#fff" font-family="Liberation Sans">K</text></svg>
<div class="tbt" style="left:883px">eft Me - 酷狗音...</div>
<svg class="a" style="left:0;top:0" width="1400" height="788"><rect x="995" y="769" width="12" height="8" rx="2" fill="#b8b8b8" stroke="#888" stroke-width=".6"/><rect x="997" y="771" width="8" height="4" fill="#d8d8d8"/><rect x="1014" y="765" width="5" height="4" fill="none" stroke="#fff" stroke-width="1"/><rect x="1016" y="767" width="5" height="4" fill="none" stroke="#fff" stroke-width="1"/><path d="M1014.5,774.5 L1019.5,774.5 L1017,777Z" fill="#fff"/><path d="M1027,770 L1037,770 M1027,775 L1037,775 M1030,767 L1030,778 M1034,767 L1034,778" stroke="#222" stroke-width="2"/><path d="M1027,770 L1037,770 M1027,775 L1037,775 M1030,767 L1030,778 M1034,767 L1034,778" stroke="#f4f4f4" stroke-width=".8"/><rect x="1043.5" y="767" width="8" height="9" fill="#7a3a9a"/><text x="1044" y="775" font-size="7" fill="#fff" font-family="Liberation Sans">N</text><circle cx="1050" cy="777" r="2.5" fill="none" stroke="#fff" stroke-width="1"/><circle cx="1055" cy="777" r="2.5" fill="none" stroke="#fff" stroke-width="1"/><path d="M1048,770 L1056,778 M1056,770 L1048,778" stroke="#7a3a9a" stroke-width="1.2"/><rect x="1063.5" y="767" width="8" height="12" rx="3" fill="#d8a840" stroke="#444" stroke-width="1"/><rect x="1065.5" y="767" width="4" height="3" fill="#eee"/><rect x="1079" y="768" width="12" height="12" rx="2" fill="#2a7ae0"/><circle cx="1085" cy="774" r="4.5" fill="none" stroke="#fff" stroke-width="1"/><text x="1082.6" y="776.6" font-size="6.5" font-weight="bold" fill="#fff" font-family="Liberation Sans">K</text><rect x="1097" y="768" width="12" height="12" rx="2" fill="#f4f6f8"/><circle cx="1100.5" cy="775" r="2" fill="none" stroke="#3a9ae0" stroke-width="1.2"/><circle cx="1104.5" cy="775" r="2" fill="none" stroke="#3a9ae0" stroke-width="1.2"/><circle cx="1102.5" cy="772" r="2" fill="none" stroke="#e04a7a" stroke-width="1.2"/><circle cx="1108" cy="769" r="2" fill="#e02020"/><rect x="1114" y="768" width="12" height="12" rx="1" fill="#b01818"/><path d="M1116.5,778 C1118,772 1120,769 1120.5,770.5 C1121,773 1118,776 1124,776.5" fill="none" stroke="#fff" stroke-width="1.2"/><ellipse cx="1136" cy="772" rx="4.5" ry="4" fill="#40c040"/><ellipse cx="1140" cy="776" rx="4.5" ry="3.8" fill="#f0f0f0" stroke="#bbb" stroke-width=".4"/><rect x="1149" y="767" width="11" height="12" rx="1.5" fill="#2a7ad8"/><path d="M1152,770 L1157,770 M1154.5,770 L1154.5,776" stroke="#fff" stroke-width="1.5"/><circle cx="1158" cy="777" r="3.5" fill="#30b040"/><path d="M1156,777 L1157.5,778.5 L1160,775.5" stroke="#fff" stroke-width="1" fill="none"/><ellipse cx="1172" cy="773" rx="5" ry="6" fill="#111"/><ellipse cx="1172" cy="775.5" rx="3.5" ry="3.5" fill="#f4f4f4"/><path d="M1168,773.5 L1176,773.5" stroke="#d02020" stroke-width="1.6"/><ellipse cx="1169" cy="779" rx="2.5" ry="1.2" fill="#e8a020"/><ellipse cx="1175" cy="779" rx="2.5" ry="1.2" fill="#e8a020"/><rect x="1184.5" y="769" width="11" height="10" fill="#f4f0e0" stroke="#b08030" stroke-width=".6"/><rect x="1185.5" y="773" width="9" height="3" fill="#f0a020"/><rect x="1191" y="768" width="5" height="3" fill="#e03030"/><rect x="1203" y="768" width="5" height="6" fill="#8a8a8a"/><circle cx="1210" cy="776" r="4" fill="#30b030"/><path d="M1208,776 L1209.5,777.5 L1212,774.5" stroke="#fff" stroke-width="1" fill="none"/><rect x="1219" y="768" width="12" height="11" fill="#111"/><path d="M1221,775 C1223,771 1228,771 1229,774 C1227,777 1223,777 1221,775Z" fill="none" stroke="#6ab020" stroke-width="1"/><rect x="1237" y="768" width="11" height="11" rx="1" fill="#f0d8c0" stroke="#e09040" stroke-width=".8"/><ellipse cx="1242.5" cy="773.5" rx="3" ry="2" fill="#e08a30"/><path d="M1255,768 L1260,767 L1265,768 L1265,774 C1265,777 1262,779 1260,780 C1258,779 1255,777 1255,774Z" fill="#f0a020"/><path d="M1260,770 C1262,773 1262,776 1260,777 C1258,776 1258,773 1260,770Z" fill="#fff"/><circle cx="1277" cy="774" r="6" fill="#188880"/><circle cx="1277" cy="774" r="4" fill="#f4f4f4"/><text x="1274.3" y="776.6" font-size="7" font-weight="bold" fill="#188880" font-family="Liberation Sans">e</text><path d="M1290,771 L1293,771 L1297,767.5 L1297,779.5 L1293,776 L1290,776Z" fill="#f0f0f0" stroke="#666" stroke-width=".5"/><path d="M1298.5,770 C1300,772 1300,775 1298.5,777 M1300.5,768.5 C1303,771 1303,776 1300.5,778.5" stroke="#f0f0f0" stroke-width="1" fill="none"/><rect x="1309" y="769" width="9" height="8" fill="#d8dde6" stroke="#333" stroke-width=".8"/><circle cx="1309" cy="769" r="2.5" fill="#fff" stroke="#333" stroke-width=".6"/><path d="M1311,777 L1311,780 L1316,780 L1316,777" stroke="#333" stroke-width=".8" fill="none"/></svg>
<div class="t" style="left:1345px;top:763px;font-size:9.5px;color:#fff;-webkit-text-stroke:.2px #fff;text-shadow:0 0 2px #334">11:10</div>
<div class="t" style="left:1333px;top:776px;font-size:9.5px;color:#fff;-webkit-text-stroke:.2px #fff;text-shadow:0 0 2px #334">2021-03-29</div>
<div class="a" style="left:1390px;top:759px;width:10px;height:29px;border:1px solid #5a6577;background:linear-gradient(90deg,#b8c4d4,#8a9ab0)"></div>
</body></html>
